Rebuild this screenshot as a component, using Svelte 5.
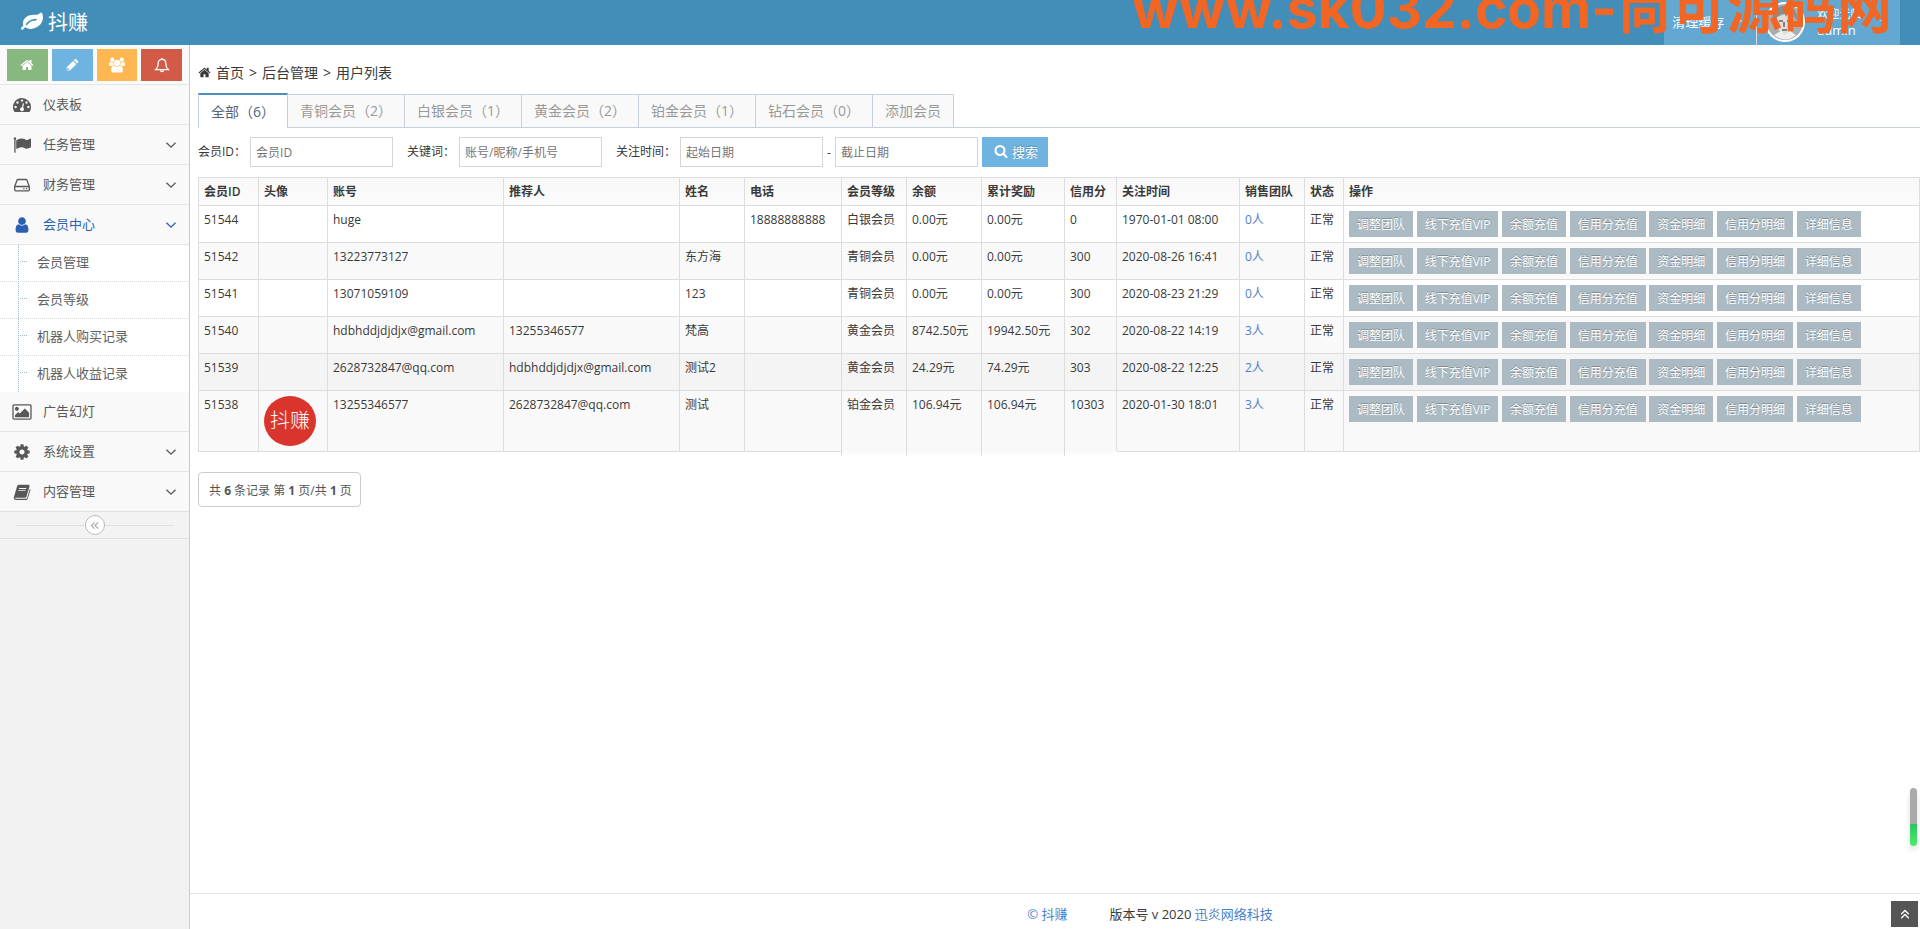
<script>
	const shortcuts = [
		{ name: '首页', icon: 'home', color: 'green' },
		{ name: '编辑', icon: 'pencil', color: 'blue' },
		{ name: '会员', icon: 'users', color: 'orange' },
		{ name: '通知', icon: 'bell', color: 'red' }
	];

	const menus = [
		{ title: '仪表板', icon: 'dashboard' },
		{ title: '任务管理', icon: 'flag', arrow: true },
		{ title: '财务管理', icon: 'hdd', arrow: true },
		{
			title: '会员中心',
			icon: 'user',
			arrow: true,
			open: true,
			children: ['会员管理', '会员等级', '机器人购买记录', '机器人收益记录']
		},
		{ title: '广告幻灯', icon: 'picture' },
		{ title: '系统设置', icon: 'cog', arrow: true },
		{ title: '内容管理', icon: 'book', arrow: true }
	];

	const tabs = [
		'全部（6）',
		'青铜会员（2）',
		'白银会员（1）',
		'黄金会员（2）',
		'铂金会员（1）',
		'钻石会员（0）',
		'添加会员'
	];
	let activeTab = 0;

	const columns = [
		{ title: '会员ID', cls: 'c-id' },
		{ title: '头像', cls: 'c-avatar' },
		{ title: '账号', cls: 'c-account' },
		{ title: '推荐人', cls: 'c-account' },
		{ title: '姓名', cls: 'c-name' },
		{ title: '电话', cls: 'c-phone' },
		{ title: '会员等级', cls: 'c-name' },
		{ title: '余额', cls: 'c-money' },
		{ title: '累计奖励', cls: 'c-reward' },
		{ title: '信用分', cls: 'c-credit' },
		{ title: '关注时间', cls: 'c-time' },
		{ title: '销售团队', cls: 'c-name' },
		{ title: '状态', cls: 'c-status' },
		{ title: '操作', cls: '' }
	];

	const users = [
		{ id: 51544, account: 'huge', parent: '', name: '', phone: '18888888888', level: '白银会员', money: '0.00', reward: '0.00', credit: 0, time: '1970-01-01 08:00', team: 0 },
		{ id: 51542, account: '13223773127', parent: '', name: '东方海', phone: '', level: '青铜会员', money: '0.00', reward: '0.00', credit: 300, time: '2020-08-26 16:41', team: 0 },
		{ id: 51541, account: '13071059109', parent: '', name: '123', phone: '', level: '青铜会员', money: '0.00', reward: '0.00', credit: 300, time: '2020-08-23 21:29', team: 0 },
		{ id: 51540, account: 'hdbhddjdjdjx@gmail.com', parent: '13255346577', name: '梵高', phone: '', level: '黄金会员', money: '8742.50', reward: '19942.50', credit: 302, time: '2020-08-22 14:19', team: 3 },
		{ id: 51539, account: '2628732847@qq.com', parent: 'hdbhddjdjdjx@gmail.com', name: '测试2', phone: '', level: '黄金会员', money: '24.29', reward: '74.29', credit: 303, time: '2020-08-22 12:25', team: 2, hover: true },
		{ id: 51538, avatar: true, account: '13255346577', parent: '2628732847@qq.com', name: '测试', phone: '', level: '铂金会员', money: '106.94', reward: '106.94', credit: 10303, time: '2020-01-30 18:01', team: 3 }
	];

	const actions = ['调整团队', '线下充值VIP', '余额充值', '信用分充值', '资金明细', '信用分明细', '详细信息'];
</script>

{#snippet icon(name)}
	{#if name === 'home'}
		<svg class="icon" viewBox="0 0 1792 1792"><path d="M1472 992v480q0 26-19 45t-45 19h-384v-384h-256v384h-384q-26 0-45-19t-19-45v-480q0-1 .5-3t.5-3l575-474 575 474q1 2 1 6zm223-69l-62 74q-8 9-21 11h-3q-13 0-21-7l-692-577-692 577q-12 8-24 7-13-2-21-11l-62-74q-8-10-7-23.5t11-21.5l719-599q32-26 76-26t76 26l244 204v-195q0-14 9-23t23-9h192q14 0 23 9t9 23v408l219 182q10 8 11 21.5t-7 23.5z" /></svg>
	{:else if name === 'leaf'}
		<svg class="icon" viewBox="0 0 1792 1792"><path d="M1280 704q0-26-19-45t-45-19q-172 0-318 49.5t-259.5 134-235.5 219.5q-19 21-19 45 0 26 19 45t45 19q24 0 45-19 27-24 74-71t67-66q137-124 268.5-176t313.5-52q26 0 45-19t19-45zm512-198q0 95-20 193-46 224-184.5 383t-357.5 268q-214 108-438 108-148 0-286-47-15-5-88-42t-96-37q-16 0-39.5 32t-45 70-52.5 70-60 32q-43 0-63.5-17.5t-45.5-59.5q-2-4-6-11t-5.5-10-3-9.5-1.5-13.5q0-35 31-73.5t68-65.5 68-56 31-48q0-4-14-38t-16-44q-9-51-9-104 0-115 43.5-220t119-184.5 170.5-139 204-95.5q55-18 145-25.5t179.5-9 178.5-6 163.5-24 113.5-56.5l29.5-29.5 29.5-28 27-20 36.5-16 43.5-4.5q39 0 70.5 46t47.5 112 24 124 8 96z" /></svg>
	{:else if name === 'pencil'}
		<svg class="icon" viewBox="0 0 16 16"><path d="M2 14.3V10.6L9.2 3.4l3.7 3.7-7.2 7.2zM10.1 2.5l1-1a1.3 1.3 0 0 1 1.8 0l1.9 1.9a1.3 1.3 0 0 1 0 1.8l-1 1z" /><path class="cut" d="M3.2 11.3l1.9 1.9-.6.6H2.6V11.9z" /></svg>
	{:else if name === 'users'}
		<svg class="icon" viewBox="0 0 1920 1792"><path d="M593 896q-162 5-265 128h-134q-82 0-138-40.5t-56-118.5q0-353 124-353 6 0 43.5 21t97.5 42.5 119 21.5q67 0 133-23-5 37-5 66 0 139 81 256zm1071 637q0 120-73 189.5t-194 69.5h-874q-121 0-194-69.5t-73-189.5q0-53 3.5-103.5t14-109 26.5-108.5 43-97.5 62-81 85.5-53.5 111.5-20q10 0 43 21.5t73 48 107 48 135 21.5 135-21.5 107-48 73-48 43-21.5q61 0 111.5 20t85.5 53.5 62 81 43 97.5 26.5 108.5 14 109 3.5 103.5zm-1024-1277q0 106-75 181t-181 75-181-75-75-181 75-181 181-75 181 75 75 181zm704 384q0 159-112.5 271.5t-271.5 112.5-271.5-112.5-112.5-271.5 112.5-271.5 271.5-112.5 271.5 112.5 112.5 271.5zm576 225q0 78-56 118.5t-138 40.5h-134q-103-123-265-128 81-117 81-256 0-29-5-66 66 23 133 23 59 0 119-21.5t97.5-42.5 43.5-21q124 0 124 353zm-128-609q0 106-75 181t-181 75-181-75-75-181 75-181 181-75 181 75 75 181z" /></svg>
	{:else if name === 'bell'}
		<svg class="icon line" viewBox="0 0 16 16"><path d="M1.8 12.6c1.8-1.6 2.4-3.4 2.4-6.4C4.200 3.900 5.900 2.400 8 2.400s3.800 1.500 3.800 3.800c0 3 .6 4.800 2.400 6.400z" /><path d="M8 2.400V1M6.600 13.200a1.400 1.400 0 0 0 2.800 0" /></svg>
	{:else if name === 'dashboard'}
		<svg class="icon" viewBox="0 0 18 16"><path fill-rule="evenodd" d="M9 1a9 9 0 0 1 9 9c0 1.800-.5 3.400-1.400 4.800-.1.200-.3.200-.5.200H1.900c-.2 0-.4 0-.5-.2A9 9 0 0 1 9 1zM2.600 8.800a1.200 1.200 0 1 0 0 2.400 1.200 1.200 0 0 0 0-2.400zM4.500 4.300a1.200 1.200 0 1 0 0 2.400 1.200 1.200 0 0 0 0-2.400zM9 2.400a1.200 1.200 0 1 0 0 2.400 1.200 1.200 0 0 0 0-2.400zM13.500 4.300a1.200 1.200 0 1 0 0 2.400 1.200 1.200 0 0 0 0-2.400zM15.400 8.800a1.200 1.200 0 1 0 0 2.400 1.200 1.200 0 0 0 0-2.400zM9.900 6.300l-1 3.900a2 2 0 1 0 1.200.3l1-3.900z" /></svg>
	{:else if name === 'flag'}
		<svg class="icon" viewBox="0 0 1792 1792"><path d="M320 256q0 72-64 110v1266q0 13-9.500 22.500t-22.500 9.500h-64q-13 0-22.500-9.500t-9.500-22.500v-1266q-64-38-64-110 0-53 37.500-90.500t90.500-37.500 90.500 37.500 37.500 90.500zm1472 64v763q0 25-12.500 38.500t-39.500 27.500q-215 116-369 116-61 0-123.500-22t-108.500-48-115.500-48-142.500-22q-192 0-464 146-17 9-33 9-26 0-45-19t-19-45v-742q0-32 31-55 21-14 79-43 236-120 421-120 107 0 200 29t219 88q38 19 88 19 54 0 117.500-21t110-47 88-47 54.500-21q26 0 45 19t19 45z" /></svg>
	{:else if name === 'hdd'}
		<svg class="icon line" viewBox="0 0 18 16"><path d="M1.700 9.500L4 3.200c.2-.5.500-.7 1-.7h8c.5 0 .8.200 1 .7l2.300 6.300v3.300c0 .7-.4 1-1 1H2.700c-.7 0-1-.4-1-1V9.500h14.600" /><path d="M10.300 11.700h1.200M13 11.700h1.200" /></svg>
	{:else if name === 'user'}
		<svg class="icon" viewBox="128 0 1536 1792"><path d="M1536 1399q0 109-62.500 187t-150.500 78h-854q-88 0-150.500-78t-62.500-187q0-85 8.500-160.500t31.500-152 58.500-131 94-89 134.500-34.500q131 128 313 128t313-128q76 0 134.500 34.500t94 89 58.500 131 31.500 152 8.500 160.500zm-256-887q0 159-112.500 271.500t-271.500 112.500-271.500-112.500-112.500-271.500 112.500-271.500 271.500-112.500 271.500 112.500 112.500 271.500z" /></svg>
	{:else if name === 'picture'}
		<svg class="icon" viewBox="-64 0 1920 1792"><path d="M576 576q0 80-56 136t-136 56-136-56-56-136 56-136 136-56 136 56 56 136zm1024 384v448h-1408v-192l320-320 160 160 512-512zm96-704h-1600q-13 0-22.500 9.500t-9.500 22.500v1216q0 13 9.500 22.500t22.500 9.500h1600q13 0 22.500-9.500t9.500-22.500v-1216q0-13-9.500-22.500t-22.500-9.500zm160 32v1216q0 66-47 113t-113 47h-1600q-66 0-113-47t-47-113v-1216q0-66 47-113t113-47h1600q66 0 113 47t47 113z" /></svg>
	{:else if name === 'cog'}
		<svg class="icon" viewBox="0 0 1792 1792"><path d="M1152 896q0-106-75-181t-181-75-181 75-75 181 75 181 181 75 181-75 75-181zm512-109v222q0 12-8 23t-20 13l-185 28q-19 54-39 91 35 50 107 138 10 12 10 25t-9 23q-27 37-99 108t-94 71q-12 0-26-9l-138-108q-44 23-91 38-16 136-29 186-7 28-36 28h-222q-14 0-24.500-8.500t-11.500-21.500l-28-184q-49-16-90-37l-141 107q-10 9-25 9-14 0-25-11-126-114-165-168-7-10-7-23 0-12 8-23 15-21 51-66.500t54-70.500q-27-50-41-99l-183-27q-13-2-21-12.500t-8-23.500v-222q0-12 8-23t19-13l186-28q14-46 39-92-40-57-107-138-10-12-10-24 0-10 9-23 26-36 98.500-107.500t94.500-71.500q13 0 26 10l138 107q44-23 91-38 16-136 29-186 7-28 36-28h222q14 0 24.500 8.500t11.500 21.500l28 184q49 16 90 37l142-107q9-9 24-9 13 0 25 10 129 119 165 170 7 8 7 22 0 12-8 23-15 21-51 66.500t-54 70.500q26 50 41 98l183 28q13 2 21 12.500t8 23.500z" /></svg>
	{:else if name === 'book'}
		<svg class="icon" viewBox="0 0 18 16"><path fill-rule="evenodd" d="M6 .8h9.300c1 0 1.500.7 1.200 1.700l-3 10c-.3.800-1 1.300-1.800 1.300H3c-.5 0-.8.200-.8.500 0 .4.300.5.800.5h10c.6 0 1-.3 1.100-.7l2.800-9.400c.6.300.7.900.5 1.500l-2.700 8.500c-.2.700-1 1.300-1.800 1.300H3c-1.500 0-2.500-1.100-2.200-2.500L4 2.400C4.300 1.300 5 .8 6 .8zM6.300 4l-.3.900h7l.3-.9zM5.600 6.200l-.3.900h7l.3-.9z" /></svg>
	{:else if name === 'search'}
		<svg class="icon" viewBox="0 0 1792 1792"><path d="M1216 832q0-185-131.500-316.500t-316.500-131.500-316.500 131.500-131.500 316.500 131.500 316.500 316.500 131.500 316.500-131.500 131.500-316.500zm512 832q0 52-38 90t-90 38q-54 0-90-38l-343-342q-179 124-399 124-143 0-273.500-55.500t-225-150-150-225-55.500-273.500 55.500-273.500 150-225 225-150 273.500-55.500 273.500 55.500 225 150 150 225 55.500 273.500q0 220-124 399l343 343q37 37 37 90z" /></svg>
	{:else if name === 'down'}
		<svg class="icon line" viewBox="0 0 10 10"><path d="M.5 2.800L5 7.200l4.500-4.400" /></svg>
	{:else if name === 'double-left'}
		<svg class="icon line" viewBox="0 0 10 10"><path d="M5 1.500L1.500 5 5 8.500M9 1.500L5.500 5 9 8.500" /></svg>
	{:else if name === 'double-up'}
		<svg class="icon line" viewBox="0 0 10 10"><path d="M1.200 5.200L5 1.500l3.800 3.700M1.200 9.200L5 5.500l3.800 3.700" /></svg>
	{/if}
{/snippet}

<div class="page">
	<header class="navbar">
		<a class="brand" href="#home">{@render icon('leaf')}抖赚</a>
		<div class="navbar-right">
			<a class="nav-item" href="#cache">清理缓存<span class="caret"></span></a>
			<a class="nav-item user" href="#user">
				<svg class="photo" viewBox="0 0 40 40">
					<circle cx="20" cy="20" r="20" fill="#fff" />
					<circle cx="20" cy="20" r="18" fill="#a9adb0" />
					<path d="M7 18C8 7 15 3 22 4c7 1 11 7 10 14l-4-5-13-1-4 10z" fill="#8b8d8f" />
					<path d="M12 15l8-3 7 3 2 9-5 9h-7l-5-8z" fill="#dededc" />
					<path d="M14 19h4M22 19h4M19 20v5M17 28h5" stroke="#666" stroke-width="1.500" fill="none" />
					<path d="M9 33l7-4 4 4 5-4 6 4q-11 9-22 0z" fill="#eee" />
				</svg>
				<span class="welcome"><small>欢迎光临,</small>admin</span>
				<span class="caret"></span>
			</a>
		</div>
		<div class="site-mark">www.sk032.com-尚可源码网</div>
	</header>

	<div class="container">
		<aside class="sidebar">
			<div class="shortcuts">
				{#each shortcuts as item}
					<button class={item.color} aria-label={item.name}>{@render icon(item.icon)}</button>
				{/each}
			</div>
			<ul class="menu">
				{#each menus as menu}
					<li class:open={menu.open}>
						<a class="menu-link" href="#menu">
							<span class="menu-icon {menu.icon}">{@render icon(menu.icon)}</span>
							<span class="menu-text">{menu.title}</span>
							{#if menu.arrow}
								<span class="arrow">{@render icon('down')}</span>
							{/if}
						</a>
						{#if menu.children}
							<ul class="submenu">
								{#each menu.children as child}
									<li><a href="#submenu">{child}</a></li>
								{/each}
							</ul>
						{/if}
					</li>
				{/each}
			</ul>
			<div class="collapse">
				<button aria-label="收起">{@render icon('double-left')}</button>
			</div>
		</aside>

		<div class="main">
			<main class="content">
				<nav class="breadcrumb">
					{@render icon('home')}
					<a href="#home">首页</a> <span>&gt;</span> <a href="#admin">后台管理</a> <span>&gt;</span> <a href="#list">用户列表</a>
				</nav>

				<div class="tabs">
					{#each tabs as tab, i}
						<button class:active={i === activeTab} on:click={() => (activeTab = i)}>{tab}</button>
					{/each}
				</div>

				<form class="search" on:submit|preventDefault>
					<div class="field">
						<label for="mid">会员ID：</label>
						<input id="mid" type="text" placeholder="会员ID" />
					</div>
					<div class="field">
						<label for="keyword">关键词：</label>
						<input id="keyword" type="text" placeholder="账号/昵称/手机号" />
					</div>
					<div class="field">
						<label for="starttime">关注时间：</label>
						<input id="starttime" type="text" placeholder="起始日期" />
						<span>-</span>
						<input type="text" placeholder="截止日期" aria-label="截止日期" />
						<button>{@render icon('search')}搜索</button>
					</div>
				</form>

				<table>
					<thead>
						<tr>
							{#each columns as column}
								<th class={column.cls}>{column.title}</th>
							{/each}
						</tr>
					</thead>
					<tbody>
						{#each users as user}
							<tr class:hover={user.hover}>
								<td>{user.id}</td>
								<td>
									{#if user.avatar}
										<div class="avatar">抖赚</div>
									{/if}
								</td>
								<td>{user.account}</td>
								<td>{user.parent}</td>
								<td>{user.name}</td>
								<td>{user.phone}</td>
								<td class="faded">{user.level}</td>
								<td class="faded">{user.money}元</td>
								<td class="faded">{user.reward}元</td>
								<td class="faded">{user.credit}</td>
								<td>{user.time}</td>
								<td><a href="#team">{user.team}人</a></td>
								<td>正常</td>
								<td class="actions">
									{#each actions as action}
										<button>{action}</button>{' '}
									{/each}
								</td>
							</tr>
						{/each}
					</tbody>
				</table>

				<div class="pager">共 <b>6</b> 条记录 第 <b>1</b> 页/共 <b>1</b> 页</div>
			</main>

			<footer>
				<a href="#home">© 抖赚</a>
				<span>版本号 v 2020 <a href="#company">迅炎网络科技</a></span>
			</footer>
		</div>
	</div>

	<div class="meter"></div>
	<button class="scroll-up" aria-label="返回顶部">{@render icon('double-up')}</button>
</div>

<style>
	:global(body) {
		margin: 0;
		background: #fff;
		color: #393939;
		font-family: 'Open Sans', 'Noto Sans CJK SC', sans-serif;
		font-size: 13px;
	}

	* {
		box-sizing: border-box;
	}

	a {
		color: inherit;
		text-decoration: none;
	}

	button,
	input {
		font-family: inherit;
	}

	button {
		padding: 0;
		border: 0;
		cursor: pointer;
	}

	ul {
		list-style: none;
		margin: 0;
		padding: 0;
	}

	.icon {
		display: block;
		width: 16px;
		height: 16px;
		fill: currentColor;
	}

	.icon.line {
		fill: none;
		stroke: currentColor;
		stroke-width: 1.3;
	}

	.cut {
		fill: #6fb3e0;
	}

	.page {
		display: flex;
		flex-direction: column;
		min-height: 100vh;
	}

	/* navbar */
	.navbar {
		position: relative;
		display: flex;
		justify-content: space-between;
		height: 45px;
		padding: 0 20px;
		background: #438eb9;
		color: #fff;
		overflow: hidden;
	}

	.brand {
		display: flex;
		align-items: center;
		gap: 5px;
		padding: 0 1px 2px;
		font-size: 20px;
	}

	.brand .icon {
		width: 22px;
		height: 22px;
	}

	.navbar-right {
		display: flex;
	}

	.nav-item {
		display: flex;
		align-items: center;
		padding: 0 8px 2px;
		background: #62a8d1;
	}

	.nav-item + .nav-item {
		border-left: 1px solid #ddd;
	}

	.nav-item .caret {
		margin: 0 6px 0 10px;
	}

	.nav-item.user .caret {
		margin: 0 4px 0 16px;
	}

	.caret {
		border: 4px solid transparent;
		border-top-color: #fff;
		border-bottom: 0;
	}

	.photo {
		width: 40px;
		height: 40px;
		margin-right: 12px;
	}

	.welcome {
		line-height: 16px;
	}

	.welcome small {
		display: block;
		font-size: 11px;
	}

	.site-mark {
		position: absolute;
		right: 28px;
		bottom: 17px;
		color: #f26522;
		font-family: Inter, 'Noto Sans CJK SC', sans-serif;
		font-size: 55px;
		font-weight: 700;
		line-height: 40px;
		white-space: nowrap;
		pointer-events: none;
	}

	.container {
		display: flex;
		flex: 1;
	}

	/* sidebar */
	.sidebar {
		flex: none;
		width: 190px;
		background: #f2f2f2;
		border-right: 1px solid #ccc;
	}

	.shortcuts {
		display: grid;
		grid-template-columns: repeat(4, 1fr);
		gap: 4px;
		padding: 4px 7px 3px;
		background: #fafafa;
	}

	.shortcuts button {
		display: flex;
		align-items: center;
		justify-content: center;
		height: 32px;
		color: #fff;
	}

	.shortcuts .green {
		background: #87b87f;
	}

	.shortcuts .blue {
		background: #6fb3e0;
	}

	.shortcuts .orange {
		background: #ffb752;
	}

	.shortcuts .red {
		background: #d15b47;
	}

	.shortcuts .icon {
		width: 14px;
		height: 14px;
	}

	.shortcuts .orange .icon,
	.shortcuts .red .icon {
		width: 16px;
		height: 16px;
	}

	.menu-link {
		display: flex;
		align-items: center;
		height: 40px;
		padding: 0 13px 0 12px;
		border-top: 1px solid #e5e5e5;
		background: #f9f9f9;
		color: #585858;
	}

	.open .menu-link {
		color: #2b5fb4;
	}

	.menu-icon {
		display: flex;
		justify-content: center;
		width: 20px;
		margin-right: 11px;
	}

	.menu-icon .icon {
		width: 18px;
		height: 18px;
	}

	.menu-icon.picture .icon {
		width: 20px;
	}

	.menu-icon.user .icon {
		width: 16px;
	}

	.menu-text {
		padding-bottom: 3px;
	}

	.arrow {
		margin-left: auto;
	}

	.arrow .icon {
		width: 10px;
		height: 10px;
	}

	.submenu {
		position: relative;
		margin-bottom: -1px;
		border-top: 1px solid #e5e5e5;
		background: #fff;
	}

	.submenu::before {
		content: '';
		position: absolute;
		top: 0;
		bottom: 0;
		left: 18px;
		border-left: 1px dotted #9dbdd6;
	}

	.submenu li + li {
		border-top: 1px dotted #ddd;
	}

	.submenu a {
		display: flex;
		align-items: center;
		height: 36px;
		padding: 0 0 3px 20px;
		color: #616161;
	}

	.submenu a::before {
		content: '';
		width: 7px;
		margin-right: 10px;
		border-top: 1px dotted #9dbdd6;
	}

	.collapse {
		padding: 3px 16px;
		border-top: 1px solid #e0e0e0;
		border-bottom: 1px solid #e0e0e0;
		background: linear-gradient(#e0e0e0, #e0e0e0) center / 158px 1px no-repeat #f3f3f3;
	}

	.collapse button {
		display: flex;
		align-items: center;
		justify-content: center;
		width: 20px;
		height: 20px;
		margin: 0 auto;
		border: 1px solid #bbb;
		border-radius: 50%;
		background: #fff;
		color: #aaa;
	}

	.collapse .icon {
		width: 9px;
		height: 9px;
	}

	/* content */
	.main {
		display: flex;
		flex: 1;
		flex-direction: column;
		min-width: 0;
	}

	.content {
		flex: 1;
		padding: 17px 0 16px 8px;
	}

	.breadcrumb {
		display: flex;
		align-items: center;
		gap: 5px;
		height: 20px;
		font-size: 14px;
	}

	.breadcrumb .icon {
		width: 13px;
		height: 13px;
	}

	.tabs {
		display: flex;
		align-items: flex-end;
		margin-top: 11px;
		border-bottom: 1px solid #c5d0dc;
	}

	.tabs button {
		height: 33px;
		margin-left: -1px;
		padding: 0 12px 2px;
		border: 1px solid #c5d0dc;
		border-bottom: 0;
		background: #f9f9f9;
		color: #999;
		font-size: 14px;
	}

	.tabs button.active {
		height: 35px;
		margin: 0 0 -1px;
		border-top: 2px solid #4c8fbd;
		background: #fff;
		color: #576373;
	}

	.search {
		display: flex;
		gap: 14px;
		padding: 9px 0 10px;
		font-size: 12px;
	}

	.field {
		display: flex;
		align-items: center;
		gap: 4px;
	}

	.field label {
		padding-bottom: 3px;
	}

	.field input {
		width: 143px;
		height: 30px;
		padding: 0 5px;
		border: 1px solid #d5d5d5;
		font-size: 12px;
	}

	.field input::placeholder {
		color: #757575;
	}

	.field button {
		display: flex;
		align-items: center;
		gap: 4px;
		height: 30px;
		padding: 0 10px 2px 12px;
		background: #6fb3e0;
		color: #fff;
		font-size: 13px;
		text-shadow: 0 -1px 0 rgba(0, 0, 0, 0.25);
	}

	.field button .icon {
		width: 14px;
		height: 14px;
	}

	/* user table */
	table {
		width: 100%;
		border-collapse: collapse;
		table-layout: fixed;
		font-size: 12px;
		line-height: 18px;
	}

	th,
	td {
		border: 1px solid #ddd;
		padding: 5px;
		text-align: left;
		vertical-align: top;
		white-space: nowrap;
	}

	th {
		padding: 5px 5px 4px;
		background: linear-gradient(#f8f8f8, #fbfbfb);
		font-weight: 600;
	}

	tbody tr:nth-child(even) {
		background: #f9f9f9;
	}

	tbody tr.hover {
		background: #f4f4f4;
	}

	td a,
	footer a {
		color: #4c7fc9;
	}

	.c-id {
		width: 60px;
	}

	.c-avatar {
		width: 69px;
	}

	.c-account {
		width: 176px;
	}

	.c-name {
		width: 65px;
	}

	.c-phone {
		width: 97px;
	}

	.c-money {
		width: 75px;
	}

	.c-reward {
		width: 83px;
	}

	.c-credit {
		width: 52px;
	}

	.c-time {
		width: 123px;
	}

	.c-status {
		width: 39px;
	}

	.avatar {
		display: flex;
		align-items: center;
		justify-content: center;
		width: 52px;
		height: 50px;
		border-radius: 50%;
		background: #d9352d;
		color: #fff;
		font-size: 20px;
		font-weight: 300;
	}

	/* bottom edge fades out under the middle columns */
	tr:last-child .faded {
		position: relative;
		border-bottom-color: #fcfcfc;
	}

	tr:last-child .faded::after {
		content: '';
		position: absolute;
		top: 100%;
		left: -1px;
		right: 0;
		height: 5px;
		border-left: 1px solid #ddd;
		background: linear-gradient(#f9f9f9, #fff);
	}

	.actions {
		font-size: 14px;
	}

	.actions button {
		height: 26px;
		padding: 0 8px;
		background: #abbac3;
		color: #fff;
		font-size: 12px;
		text-shadow: 0 -1px 0 rgba(0, 0, 0, 0.25);
		vertical-align: top;
	}

	.pager {
		display: inline-block;
		margin-top: 20px;
		padding: 9px 8px 6px 10px;
		border: 1px solid #ccc;
		border-radius: 4px;
		color: #555;
		font-size: 12px;
		line-height: 18px;
	}

	footer {
		display: flex;
		justify-content: center;
		gap: 42px;
		padding: 11px 0 6px 190px;
		border-top: 1px solid #e5e5e5;
		line-height: 18px;
	}

	.meter {
		position: fixed;
		right: 3px;
		bottom: 83px;
		width: 7px;
		height: 58px;
		border-radius: 4px;
		background: linear-gradient(#aaa 62%, #2fc463 62%, #4bea6c);
		box-shadow: 0 4px 6px rgba(0, 0, 0, 0.12);
	}

	.scroll-up {
		position: fixed;
		right: 2px;
		bottom: 2px;
		display: flex;
		align-items: center;
		justify-content: center;
		width: 27px;
		height: 26px;
		background: #555;
		color: #fff;
	}

	.scroll-up .icon {
		width: 10px;
		height: 10px;
	}
</style>
